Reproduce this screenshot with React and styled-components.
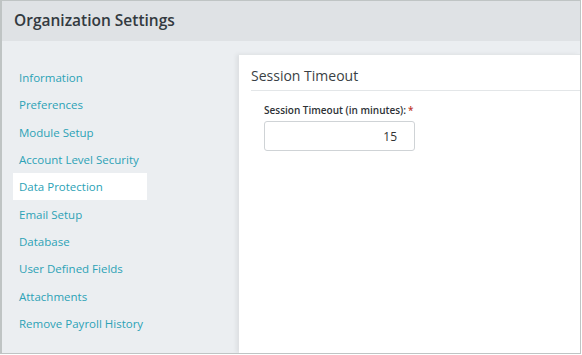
import styled, { createGlobalStyle } from 'styled-components'

const GlobalStyle = createGlobalStyle`
  html, body {
    margin: 0;
    padding: 0;
    background: #ffffff;
  }
  * {
    box-sizing: border-box;
  }
`

const Frame = styled.div`
  width: 581px;
  height: 354px;
  border: 1px solid #bfc4c4;
  border-left-width: 2px;
  background: #ebeef1;
  display: flex;
  flex-direction: column;
  overflow: hidden;
  font-family: 'Open Sans', 'Noto Sans', sans-serif;
`

const Header = styled.div`
  height: 40px;
  flex-shrink: 0;
  background: #dfe2e5;
  display: flex;
  align-items: center;
  padding: 0 0 2px 12px;

  h1 {
    margin: 0;
    font-size: 15.5px;
    font-weight: 600;
    color: #333a40;
  }
`

const Body = styled.div`
  flex: 1;
  display: flex;
  padding-top: 13px;
`

const Sidebar = styled.nav`
  width: 237px;
  flex-shrink: 0;
  display: flex;
  flex-direction: column;
  padding: 10px 0 0 11px;
`

const NavItem = styled.a`
  flex-shrink: 0;
  display: flex;
  align-items: center;
  width: 134px;
  height: 27.3px;
  padding-left: 6px;
  white-space: nowrap;
  font-size: 11.5px;
  color: #2ba2b6;
  text-decoration: none;
  background: ${(p) => (p.$active ? '#ffffff' : 'transparent')};
`

const Panel = styled.section`
  flex: 1;
  background: #ffffff;
  border-top: 1px solid #e3e6e8;
  box-shadow: -3px 0 4px rgba(0, 0, 0, 0.06);
  padding-left: 12px;
`

const PanelTitle = styled.h2`
  margin: 0;
  height: 36px;
  display: flex;
  align-items: center;
  padding-top: 6px;
  font-size: 14px;
  font-weight: 400;
  color: #3a3f44;
  border-bottom: 1px solid #e3e6e8;
`

const Field = styled.div`
  padding: 12px 0 0 13px;
  display: flex;
  flex-direction: column;
  gap: 4px;
`

const Label = styled.label`
  font-size: 10px;
  font-weight: 600;
  color: #2e3236;

  span {
    color: #c0392b;
    margin-left: 2px;
  }
`

const Input = styled.input`
  width: 151px;
  height: 30px;
  border: 1px solid #cfd3d6;
  border-radius: 3px;
  padding: 0 17px 0 8px;
  text-align: right;
  font-family: 'Open Sans', 'Noto Sans', sans-serif;
  font-size: 12px;
  color: #333;
  outline: none;
`

const items = [
  'Information',
  'Preferences',
  'Module Setup',
  'Account Level Security',
  'Data Protection',
  'Email Setup',
  'Database',
  'User Defined Fields',
  'Attachments',
  'Remove Payroll History',
]

export default function App() {
  return (
    <>
      <GlobalStyle />
      <Frame>
        <Header>
          <h1>Organization Settings</h1>
        </Header>
        <Body>
          <Sidebar>
            {items.map((item) => (
              <NavItem key={item} $active={item === 'Data Protection'}>
                {item}
              </NavItem>
            ))}
          </Sidebar>
          <Panel>
            <PanelTitle>Session Timeout</PanelTitle>
            <Field>
              <Label>
                Session Timeout (in minutes):<span>*</span>
              </Label>
              <Input defaultValue="15" />
            </Field>
          </Panel>
        </Body>
      </Frame>
    </>
  )
}
